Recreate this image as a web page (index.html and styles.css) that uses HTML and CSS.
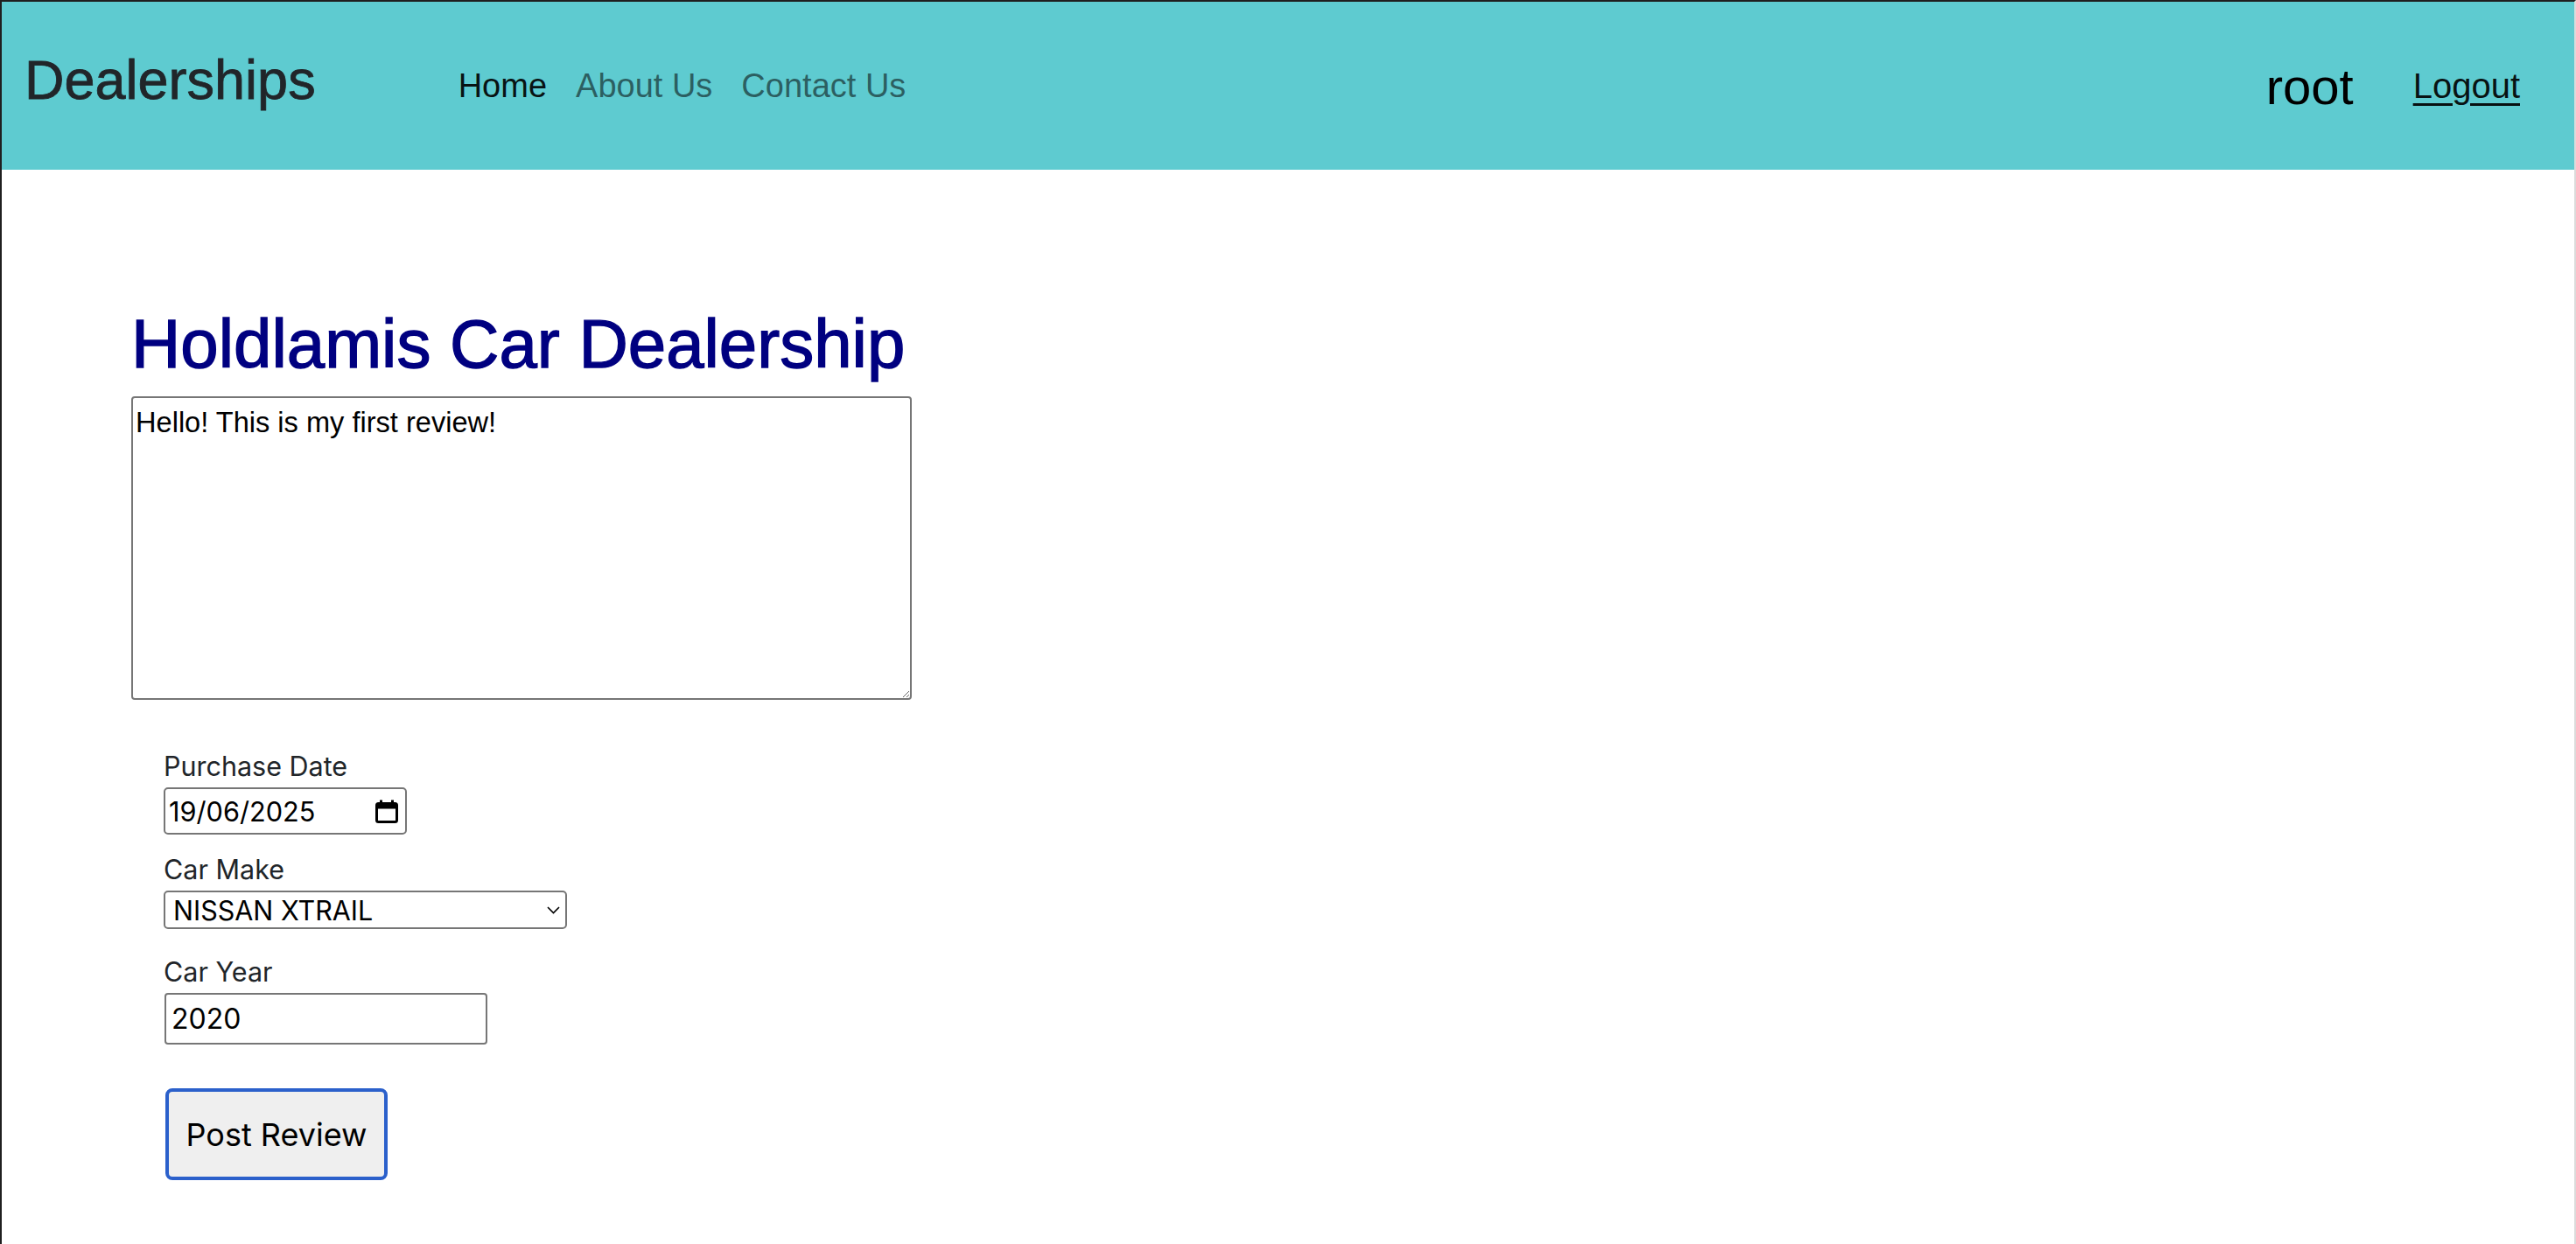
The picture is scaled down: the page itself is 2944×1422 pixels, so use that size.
FILE: index.html
```html
<!DOCTYPE html>
<html lang="en">
<head>
<meta charset="utf-8">
<title>Dealerships - Post Review</title>
<link rel="stylesheet" href="styles.css">
</head>
<body>
<div class="page">
  <nav class="navbar">
    <a class="brand" href="#">Dealerships</a>
    <ul class="nav-links">
      <li><a class="nav-link active" href="#">Home</a></li>
      <li><a class="nav-link" href="#">About Us</a></li>
      <li><a class="nav-link" href="#">Contact Us</a></li>
    </ul>
    <div class="nav-user">
      <span class="username">root</span>
      <a class="logout" href="#">Logout</a>
    </div>
  </nav>

  <main class="content">
    <h1 class="title">Holdlamis Car Dealership</h1>
    <textarea class="review" id="review">Hello! This is my first review!</textarea>

    <div class="field field-date">
      <label class="field-label" for="purchase">Purchase Date</label>
      <div class="control date-control">
        <input class="control-input" id="purchase" type="text" value="19/06/2025">
        <svg class="cal-icon" width="26" height="27" viewBox="0 0 26 27" aria-hidden="true">
          <rect x="1.5" y="4.5" width="23" height="21" rx="2" fill="none" stroke="#000" stroke-width="3"/>
          <rect x="1.5" y="4.5" width="23" height="6" fill="#000"/>
          <rect x="5" y="0.5" width="3" height="5" fill="#000"/>
          <rect x="18" y="0.5" width="3" height="5" fill="#000"/>
        </svg>
      </div>
    </div>

    <div class="field field-make">
      <label class="field-label" for="cars">Car Make</label>
      <div class="control select-control">
        <select class="control-select" id="cars">
          <option selected>NISSAN XTRAIL</option>
        </select>
        <svg class="chevron" width="15" height="9" viewBox="0 0 15 9" aria-hidden="true">
          <polyline points="1,1 7.5,7.5 14,1" fill="none" stroke="#000" stroke-width="1.6"/>
        </svg>
      </div>
    </div>

    <div class="field field-year">
      <label class="field-label" for="year">Car Year</label>
      <div class="control year-control">
        <input class="control-input year-input" id="year" type="text" value="2020">
      </div>
    </div>

    <button class="post-btn" type="button">Post Review</button>
  </main>
</div>
</body>
</html>
```

FILE: styles.css
```css
html, body {
  margin: 0;
  padding: 0;
  background: #ffffff;
}

.page {
  box-sizing: border-box;
  min-height: 100vh;
  width: 100%;
  border-top: 2px solid #1f1f1f;
  border-left: 2px solid #1f1f1f;
  border-right: 2px solid rgba(190, 190, 190, 0.55);
  font-family: "Liberation Sans", Arial, sans-serif;
  color: #212529;
}

/* ---------- navbar ---------- */
.navbar {
  display: flex;
  align-items: center;
  height: 192px;
  padding: 0 62px 0 26px;
  background: #5ecbd0;
}

.brand {
  font-family: "Liberation Sans", Arial, sans-serif;
  font-size: 63px;
  color: #212529;
  -webkit-text-stroke: 0.8px #212529;
  text-decoration: none;
  margin-right: 147px;
  margin-bottom: 14px;
}

.nav-links {
  display: flex;
  list-style: none;
  margin: 0;
  padding: 0;
}

.nav-link {
  display: block;
  padding: 0 16px;
  font-size: 38px;
  color: rgba(0, 0, 0, 0.55);
  text-decoration: none;
}

.nav-links li + li .nav-link {
  padding-left: 17px;
}

.nav-link.active {
  color: rgba(0, 0, 0, 0.92);
}

.nav-user {
  margin-left: auto;
  display: flex;
  align-items: center;
  gap: 68px;
}

.username {
  font-size: 58px;
  color: #000;
}

.logout {
  font-size: 40px;
  color: rgba(0, 0, 0, 0.92);
  text-decoration: underline;
  text-decoration-thickness: 3px;
  text-underline-offset: 6px;
}

/* ---------- content ---------- */
.content {
  padding-left: 148px;
}

.title {
  margin: 152px 0 12px 0;
  font-family: "Liberation Sans", Arial, sans-serif;
  font-size: 78px;
  line-height: 95px;
  font-weight: 400;
  color: #000080;
  -webkit-text-stroke: 1.4px #000080;
}

.review {
  display: block;
  box-sizing: border-box;
  width: 892px;
  height: 347px;
  margin: 0;
  padding: 9px 3px;
  border: 2px solid #767676;
  border-radius: 4px;
  font-family: "Liberation Sans", Arial, sans-serif;
  font-size: 32.6px;
  line-height: 37px;
  color: #000;
  resize: both;
}

.field {
  margin-left: 37px;
}

.field-date { margin-top: 58px; }
.field-make { margin-top: 22px; }
.field-year { margin-top: 31px; }

.field-label {
  display: block;
  margin-bottom: 6px;
  font-family: Inter, "Noto Sans", sans-serif;
  font-size: 30.5px;
  line-height: 36px;
  color: #212529;
}

.control {
  box-sizing: border-box;
  display: flex;
  align-items: center;
  border: 2px solid #767676;
  border-radius: 5px;
  background: #fff;
}

.control-input,
.control-select {
  flex: 1;
  min-width: 0;
  margin: 0;
  padding: 0;
  border: none;
  outline: none;
  background: transparent;
  font-family: Inter, "Noto Sans", sans-serif;
  color: #000;
}

.date-control {
  width: 278px;
  height: 54px;
  padding: 0 8px 0 4px;
}

.date-control .control-input {
  font-size: 30.7px;
}

.cal-icon {
  flex: none;
}

.select-control {
  width: 461px;
  height: 44px;
  padding: 0 6px 0 9px;
}

.control-select {
  -webkit-appearance: none;
  appearance: none;
  font-size: 30.5px;
  height: 100%;
}

.chevron {
  flex: none;
}

.year-control {
  width: 369px;
  height: 59px;
  margin-left: 1px;
  padding: 0 6px;
  border-radius: 4px;
}

.year-input {
  font-size: 32px;
}

.post-btn {
  display: block;
  box-sizing: border-box;
  width: 254px;
  height: 105px;
  margin: 50px 0 0 39px;
  padding: 0;
  border: 4px solid #2b60cb;
  border-radius: 8px;
  background: #efefef;
  font-family: Inter, "Noto Sans", sans-serif;
  font-size: 36px;
  color: #000;
  text-align: center;
  cursor: pointer;
}
```
